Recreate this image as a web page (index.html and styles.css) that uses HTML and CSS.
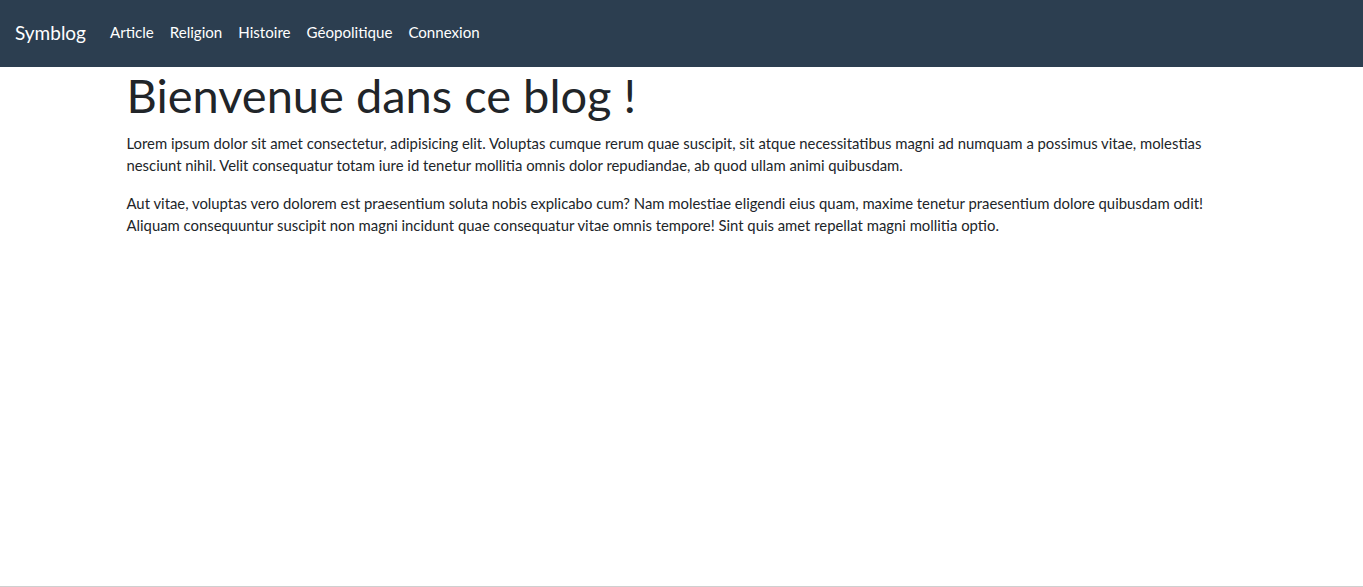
FILE: index.html
```html
<!DOCTYPE html>
<html lang="fr">
<head>
<meta charset="utf-8">
<title>Symblog</title>
<link rel="stylesheet" href="styles.css">
</head>
<body>
<div class="page">
  <nav class="navbar">
    <a class="brand" href="#">Symblog</a>
    <ul class="nav">
      <li><a class="nav-link" href="#">Article</a></li>
      <li><a class="nav-link" href="#">Religion</a></li>
      <li><a class="nav-link" href="#">Histoire</a></li>
      <li><a class="nav-link" href="#">Géopolitique</a></li>
      <li><a class="nav-link" href="#">Connexion</a></li>
    </ul>
  </nav>
  <main class="container">
    <h1 class="title">Bienvenue dans ce blog !</h1>
    <p class="text">Lorem ipsum dolor sit amet consectetur, adipisicing elit. Voluptas cumque rerum quae suscipit, sit atque necessitatibus magni ad numquam a possimus vitae, molestias nesciunt nihil. Velit consequatur totam iure id tenetur mollitia omnis dolor repudiandae, ab quod ullam animi quibusdam.</p>
    <p class="text">Aut vitae, voluptas vero dolorem est praesentium soluta nobis explicabo cum? Nam molestiae eligendi eius quam, maxime tenetur praesentium dolore quibusdam odit! Aliquam consequuntur suscipit non magni incidunt quae consequatur vitae omnis tempore! Sint quis amet repellat magni mollitia optio.</p>
  </main>
</div>
</body>
</html>
```
FILE: styles.css
```css
* { box-sizing: border-box; }
html, body { margin: 0; padding: 0; }
body {
  font-family: Lato, "Noto Sans", sans-serif;
  font-size: 14.85px;
  line-height: 22.5px;
  color: #212529;
  background: #fff;
}
.page {
  min-height: 100vh;
  border-bottom: 1px solid #cfcfcf;
}
.navbar {
  display: flex;
  align-items: center;
  background: #2c3e50;
  padding: 0 15px 2px;
  height: 67px;
}
.brand {
  color: #fff;
  text-decoration: none;
  font-size: 19px;
  line-height: 28px;
  margin-right: 16px;
}
.nav {
  display: flex;
  list-style: none;
  margin: 0;
  padding: 0;
}
.nav-link {
  display: block;
  color: #fff;
  text-decoration: none;
  padding: 8px;
  font-size: 15.1px;
}
.container {
  max-width: 1140px;
  margin: 0 auto;
  padding: 0 15px;
}
.title {
  font-size: 47px;
  font-weight: 400;
  line-height: 1.2;
  margin: 0 0 8.5px;
}
.text {
  margin: 0 0 15px;
}
```
